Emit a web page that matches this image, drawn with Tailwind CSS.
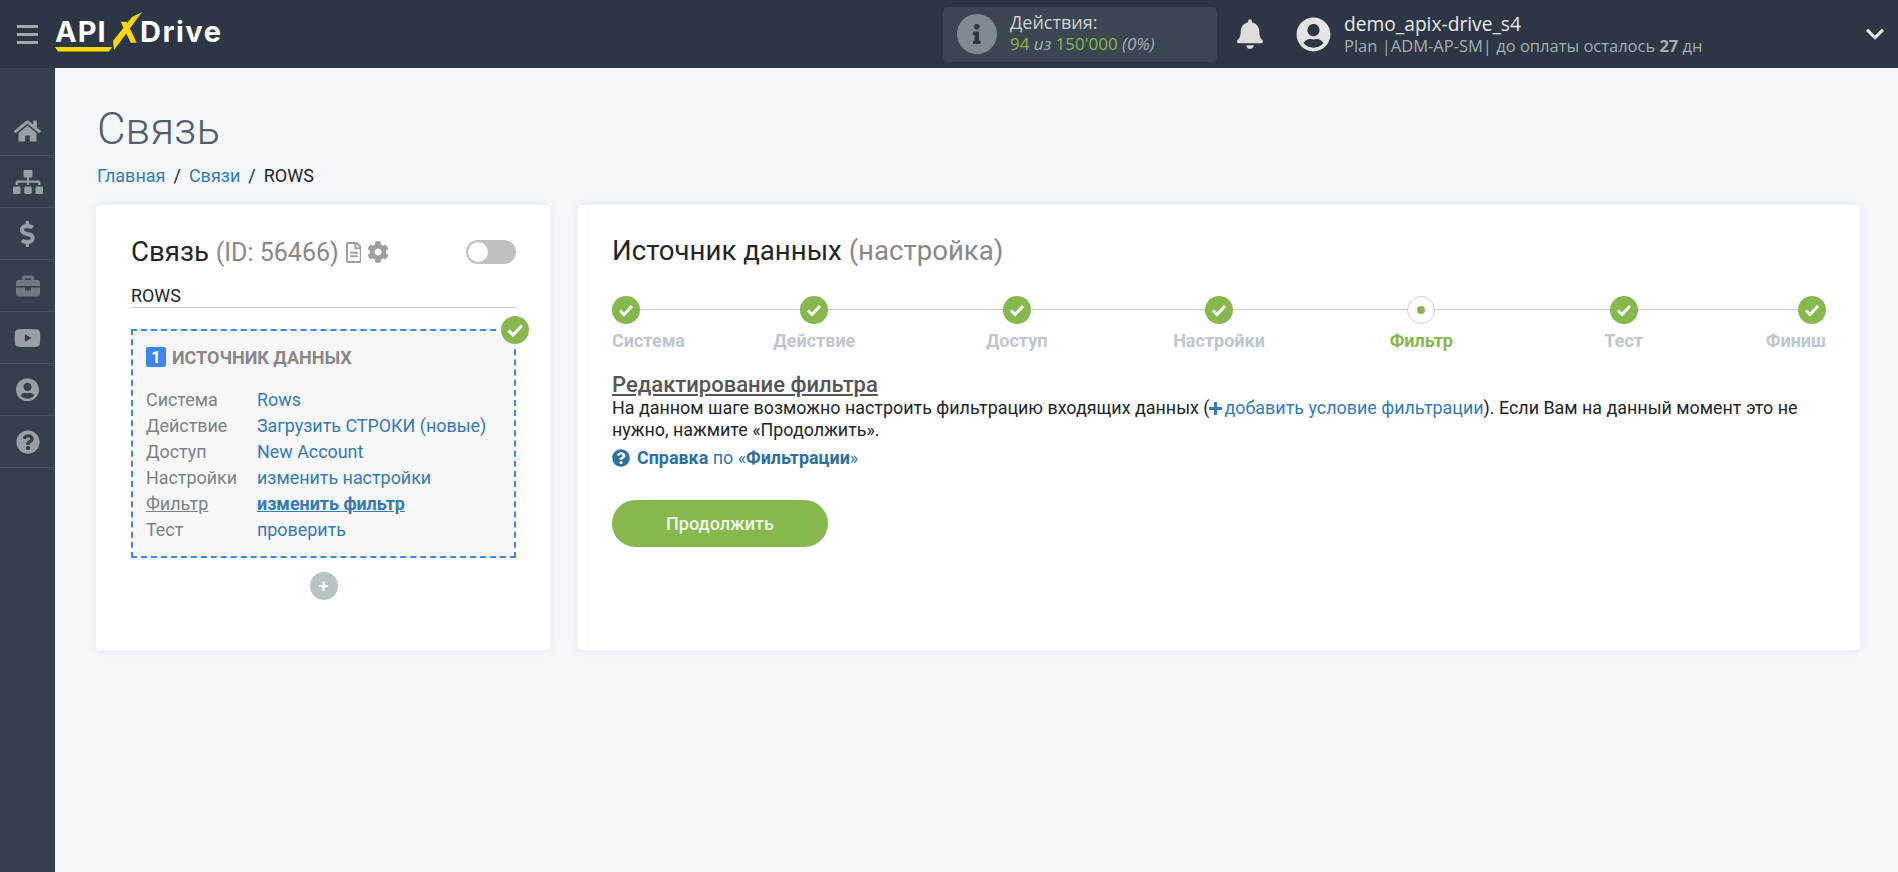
<!DOCTYPE html>
<html>

<head>
    <title>ApiX-Drive</title>
    <script src="https://cdn.jsdelivr.net/npm/@tailwindcss/browser@4"></script>
</head>

<body class="bg-[#f4f7fc] font-['Roboto',sans-serif] text-[17.9px] text-[#212529] h-[872px] overflow-hidden">

    <!-- Top bar -->
    <header class="h-[68px] bg-[#2c3644] flex items-center font-['Open_Sans',sans-serif]">
        <div class="w-[55px] pl-[17px] flex flex-col gap-[5px] shrink-0">
            <div class="w-[21px] h-[3px] bg-[#a3a7ad]"></div>
            <div class="w-[21px] h-[3px] bg-[#a3a7ad]"></div>
            <div class="w-[21px] h-[3px] bg-[#a3a7ad]"></div>
        </div>
        <!-- Logo -->
        <div class="relative w-[170px] h-[50px] shrink-0 text-white font-['Inter',sans-serif] font-bold text-[29px] leading-[50px]">
            <span class="absolute left-0 top-[-2px] tracking-[1px]">API</span>
            <span class="absolute left-[85px] top-[-2px] tracking-[1.5px]">Drive</span>
            <svg class="absolute left-0 top-0" width="170" height="50" viewBox="55 9 170 50">
                <path d="M55 47h57l-3 4.5H58z" fill="#ffd800" />
                <path d="M132 17l10-5-28 38-1-9z" fill="#ffd800" />
                <path d="M120.700 21.700h6l10 21h-6z" fill="#ffd800" />
            </svg>
        </div>
        <!-- Actions -->
        <div class="ml-[718px] w-[274px] h-[55px] bg-[#3a4651] rounded-[5px] flex items-center pl-[14px] shrink-0">
            <div class="w-[40px] h-[40px] rounded-full bg-[#818991] flex items-center justify-center">
                <svg class="h-[20px]" viewBox="0 0 192 512" fill="#2c3644"><path d="M20 424.229h20V279.771H20c-11.046 0-20-8.954-20-20V212c0-11.046 8.954-20 20-20h112c11.046 0 20 8.954 20 20v212.229h20c11.046 0 20 8.954 20 20V492c0 11.046-8.954 20-20 20H20c-11.046 0-20-8.954-20-20v-47.771c0-11.046 8.954-20 20-20zM96 0C56.235 0 24 32.235 24 72s32.235 72 72 72 72-32.235 72-72S135.764 0 96 0z"/></svg>
            </div>
            <div class="ml-[13px] mt-[-2px]">
                <div class="text-[#cfd2d5] text-[18px] leading-[22px]">Действия:</div>
                <div class="text-[#88b84e] text-[17px] leading-[22px]">94 <i class="text-[#a5adb5]">из</i> 150'000 <i class="text-[#a5adb5]">(0%)</i></div>
            </div>
        </div>
        <svg class="ml-[20px] w-[26px] h-[30px] shrink-0" viewBox="0 0 448 512" fill="#dcdcdc"><path d="M224 512c35.32 0 63.97-28.65 63.97-64H160.03c0 35.35 28.65 64 63.97 64zm215.39-149.71c-19.32-20.76-55.47-51.99-55.47-154.29 0-77.7-54.48-139.9-127.94-155.16V32c0-17.67-14.32-32-31.98-32s-31.98 14.33-31.98 32v20.84C118.56 68.1 64.08 130.3 64.08 208c0 102.3-36.15 133.53-55.47 154.29-6 6.45-8.66 14.16-8.61 21.71.11 16.4 12.98 32 32.1 32h383.8c19.12 0 32-15.6 32.1-32 .05-7.55-2.61-15.27-8.61-21.71z"/></svg>
        <svg class="ml-[33px] w-[35px] h-[35px] shrink-0" viewBox="0 0 496 512" fill="#e4e4e4"><path d="M248 8C111 8 0 119 0 256s111 248 248 248 248-111 248-248S385 8 248 8zm0 96c48.6 0 88 39.4 88 88s-39.4 88-88 88-88-39.4-88-88 39.4-88 88-88zm0 344c-58.7 0-111.3-26.6-146.5-68.2 18.8-35.4 55.6-59.8 98.5-59.8 2.4 0 4.8.4 7.1 1.1 13 4.2 26.6 6.9 40.9 6.9 14.3 0 28-2.7 40.9-6.9 2.3-.7 4.7-1.1 7.1-1.1 42.9 0 79.7 24.4 98.5 59.8C359.3 421.4 306.7 448 248 448z"/></svg>
        <div class="ml-[13px] flex-1">
            <div class="text-[19.200px] leading-[24px] text-[#ebebeb]">demo_apix-drive_s4</div>
            <div class="text-[16.500px] leading-[20px] text-[#a5adb5]">Plan |ADM-AP-SM| до оплаты осталось <b>27</b> дн</div>
        </div>
        <svg class="w-[18px] mr-[14px] shrink-0" viewBox="0 0 448 512" fill="#e4e4e4"><path d="M207.029 381.476L12.686 187.132c-9.373-9.373-9.373-24.569 0-33.941l22.667-22.667c9.357-9.357 24.522-9.375 33.901-.04L224 284.505l154.745-154.021c9.379-9.335 24.544-9.317 33.901.04l22.667 22.667c9.373 9.373 9.373 24.569 0 33.941L240.971 381.476c-9.373 9.372-24.569 9.372-33.942 0z"/></svg>
    </header>

    <div class="flex h-[804px]">
        <!-- Sidebar -->
        <aside class="w-[55px] shrink-0 bg-[#353f4d] pt-[36px]">
            <div class="h-[52px] border-b border-[#4a5462] flex items-center justify-center">
                <svg class="w-[27px] mt-[2px]" viewBox="0 0 576 512" fill="#9a9fa6"><path d="M280.37 148.26L96 300.11V464a16 16 0 0 0 16 16l112.06-.29a16 16 0 0 0 15.92-16V368a16 16 0 0 1 16-16h64a16 16 0 0 1 16 16v95.64a16 16 0 0 0 16 16.05L464 480a16 16 0 0 0 16-16V300L295.67 148.26a12.19 12.19 0 0 0-15.3 0zM571.6 251.47L488 182.56V44.05a12 12 0 0 0-12-12h-56a12 12 0 0 0-12 12v72.61L318.47 43a48 48 0 0 0-61 0L4.34 251.47a12 12 0 0 0-1.6 16.9l25.5 31A12 12 0 0 0 45.15 301l235.22-193.74a12.19 12.19 0 0 1 15.3 0L530.9 301a12 12 0 0 0 16.9-1.6l25.5-31a12 12 0 0 0-1.7-16.93z"/></svg>
            </div>
            <div class="h-[52px] border-b border-[#4a5462] flex items-center justify-center">
                <svg class="w-[30px]" viewBox="0 0 640 512" fill="#9a9fa6"><path d="M128 352H32c-17.67 0-32 14.33-32 32v96c0 17.67 14.33 32 32 32h96c17.67 0 32-14.33 32-32v-96c0-17.67-14.33-32-32-32zm-24-80h192v48h48v-48h192v48h48v-57.59c0-21.17-17.23-38.41-38.41-38.41H344v-64h40c17.67 0 32-14.33 32-32V32c0-17.67-14.33-32-32-32H256c-17.67 0-32 14.33-32 32v96c0 17.67 14.33 32 32 32h40v64H94.41C73.23 224 56 241.23 56 262.41V320h48v-48zm264 80h-96c-17.67 0-32 14.33-32 32v96c0 17.67 14.33 32 32 32h96c17.67 0 32-14.33 32-32v-96c0-17.67-14.33-32-32-32zm240 0h-96c-17.67 0-32 14.33-32 32v96c0 17.67 14.33 32 32 32h96c17.67 0 32-14.33 32-32v-96c0-17.67-14.33-32-32-32z"/></svg>
            </div>
            <div class="h-[52px] border-b border-[#4a5462] flex items-center justify-center">
                <svg class="h-[26px]" viewBox="0 0 288 512" fill="#9a9fa6"><path d="M209.2 233.4l-108-31.6C88.7 198.2 80 186.5 80 173.5c0-16.3 13.2-29.5 29.5-29.5h66.3c12.2 0 24.2 3.7 34.2 10.5 6.1 4.1 14.3 3.1 19.5-2l34.8-34c7.1-6.9 6.1-18.4-1.8-24.5C238 74.8 207.4 64.1 176 64V16c0-8.8-7.2-16-16-16h-32c-8.8 0-16 7.2-16 16v48h-2.5C45.8 64-5.4 118.7.5 183.6c4.2 46.1 39.4 83.6 83.8 96.6l102.5 30c12.5 3.7 21.2 15.3 21.2 28.3 0 16.3-13.2 29.5-29.5 29.5h-66.3C100 368 88 364.3 78 357.5c-6.1-4.1-14.3-3.1-19.5 2l-34.8 34c-7.1 6.9-6.1 18.4 1.8 24.5 24.5 19.2 55.1 29.9 86.5 30v48c0 8.8 7.2 16 16 16h32c8.8 0 16-7.2 16-16v-48.2c46.6-.9 90.3-28.6 105.7-72.7 21.5-61.6-14.6-124.8-72.5-141.7z"/></svg>
            </div>
            <div class="h-[52px] border-b border-[#4a5462] flex items-center justify-center">
                <svg class="w-[24px]" viewBox="0 0 512 512" fill="#6f7882"><path d="M320 336c0 8.84-7.16 16-16 16h-96c-8.84 0-16-7.16-16-16v-48H0v144c0 25.6 22.4 48 48 48h416c25.6 0 48-22.4 48-48V288H320v48zm144-208h-80V80c0-25.6-22.4-48-48-48H176c-25.6 0-48 22.4-48 48v48H48c-25.6 0-48 22.4-48 48v80h512v-80c0-25.6-22.4-48-48-48zm-144 0H192V96h128v32z"/></svg>
            </div>
            <div class="h-[52px] border-b border-[#4a5462] flex items-center justify-center">
                <svg class="w-[27px]" viewBox="0 0 576 512" fill="#9a9fa6"><path d="M549.655 124.083c-6.281-23.65-24.787-42.276-48.284-48.597C458.781 64 288 64 288 64S117.22 64 74.629 75.486c-23.497 6.322-42.003 24.947-48.284 48.597-11.412 42.867-11.412 132.305-11.412 132.305s0 89.438 11.412 132.305c6.281 23.65 24.787 41.5 48.284 47.821C117.22 448 288 448 288 448s170.78 0 213.371-11.486c23.497-6.321 42.003-24.171 48.284-47.821 11.412-42.867 11.412-132.305 11.412-132.305s0-89.438-11.412-132.305zm-317.51 213.508V175.185l142.739 81.205-142.739 81.201z"/></svg>
            </div>
            <div class="h-[52px] border-b border-[#4a5462] flex items-center justify-center">
                <svg class="w-[23px]" viewBox="0 0 496 512" fill="#9a9fa6"><path d="M248 8C111 8 0 119 0 256s111 248 248 248 248-111 248-248S385 8 248 8zm0 96c48.6 0 88 39.4 88 88s-39.4 88-88 88-88-39.4-88-88 39.4-88 88-88zm0 344c-58.7 0-111.3-26.6-146.5-68.2 18.8-35.4 55.6-59.8 98.5-59.8 2.4 0 4.8.4 7.1 1.1 13 4.2 26.6 6.9 40.9 6.9 14.3 0 28-2.7 40.9-6.9 2.3-.7 4.7-1.1 7.1-1.1 42.9 0 79.7 24.4 98.5 59.8C359.3 421.4 306.7 448 248 448z"/></svg>
            </div>
            <div class="h-[52px] border-b border-[#4a5462] flex items-center justify-center">
                <svg class="w-[24px]" viewBox="0 0 512 512" fill="#9a9fa6"><path d="M504 256c0 136.997-111.043 248-248 248S8 392.997 8 256C8 119.083 119.043 8 256 8s248 111.083 248 248zM262.655 90c-54.497 0-89.255 22.957-116.549 63.758-3.536 5.286-2.353 12.415 2.715 16.258l34.699 26.31c5.205 3.947 12.621 3.008 16.665-2.122 17.864-22.658 30.113-35.797 57.303-35.797 20.429 0 45.698 13.148 45.698 32.958 0 14.976-12.363 22.667-32.534 33.976C247.128 238.528 216 254.941 216 296v4c0 6.627 5.373 12 12 12h56c6.627 0 12-5.373 12-12v-1.333c0-28.462 83.186-29.647 83.186-106.667 0-58.002-60.165-102-116.531-102zM256 338c-25.365 0-46 20.635-46 46 0 25.364 20.635 46 46 46s46-20.636 46-46c0-25.365-20.635-46-46-46z"/></svg>
            </div>
        </aside>

        <!-- Main -->
        <main class="flex-1 pl-[41px] pr-[38px]">
            <h1 class="text-[44px] leading-[52px] font-light text-[#4f5f6b] mt-[35px] ml-[1px]">Связь</h1>
            <div class="mt-[10px] ml-[1px] h-[22px] leading-[22px] text-[18px] flex gap-[8px]">
                <span class="text-[#337ab7]">Главная</span><span>/</span><span class="text-[#337ab7]">Связи</span><span>/</span><span>ROWS</span>
            </div>
            <div class="flex gap-[28px] mt-[18px]">
                <!-- Left card -->
                <section class="w-[454px] h-[445px] bg-white rounded-[4px] shadow-[0_0_10px_rgba(100,120,160,0.12)] pl-[35px] pr-[34px] pt-[29px]">
                    <div class="flex items-center h-[36px]">
                        <span class="text-[27.600px] leading-[36px] whitespace-nowrap">Связь <span class="text-[#888888] text-[25px]">(ID: 56466)</span></span>
                        <svg class="ml-[7px] h-[21px]" viewBox="0 0 384 512" fill="#9e9e9e"><path d="M288 248v28c0 6.6-5.4 12-12 12H108c-6.6 0-12-5.4-12-12v-28c0-6.6 5.4-12 12-12h168c6.6 0 12 5.4 12 12zm-12 72H108c-6.6 0-12 5.4-12 12v28c0 6.6 5.4 12 12 12h168c6.6 0 12-5.4 12-12v-28c0-6.6-5.4-12-12-12zm108-188.1V464c0 26.5-21.5 48-48 48H48c-26.5 0-48-21.5-48-48V48C0 21.5 21.5 0 48 0h204.1C264.8 0 277 5.1 286 14.1L369.9 98c9 8.9 14.1 21.2 14.1 33.9zm-128-80V128h76.1L256 51.9zM336 464V176H232c-13.3 0-24-10.7-24-24V48H48v416h288z"/></svg>
                        <svg class="ml-[6px] h-[22px]" viewBox="0 0 512 512" fill="#9e9e9e"><path d="M487.4 315.7l-42.6-24.6c4.3-23.2 4.3-47 0-70.2l42.6-24.6c4.9-2.8 7.1-8.6 5.5-14-11.1-35.6-30-67.8-54.7-94.6-3.8-4.1-10-5.1-14.8-2.3L380.8 110c-17.9-15.4-38.5-27.3-60.8-35.1V25.8c0-5.6-3.9-10.5-9.4-11.7-36.7-8.2-74.3-7.8-109.2 0-5.5 1.2-9.4 6.1-9.4 11.7V75c-22.2 7.9-42.8 19.8-60.8 35.1L88.7 85.5c-4.9-2.8-11-1.9-14.8 2.3-24.7 26.7-43.6 58.9-54.7 94.6-1.7 5.4.6 11.2 5.5 14L67.3 221c-4.3 23.2-4.3 47 0 70.2l-42.6 24.6c-4.9 2.8-7.1 8.6-5.5 14 11.1 35.6 30 67.8 54.7 94.6 3.8 4.1 10 5.1 14.8 2.3l42.6-24.6c17.9 15.4 38.5 27.3 60.8 35.1v49.2c0 5.6 3.9 10.5 9.4 11.7 36.7 8.2 74.3 7.8 109.2 0 5.5-1.2 9.4-6.1 9.4-11.7v-49.2c22.2-7.9 42.8-19.8 60.8-35.1l42.6 24.6c4.9 2.8 11 1.9 14.8-2.3 24.7-26.7 43.6-58.9 54.7-94.6 1.5-5.5-.7-11.3-5.6-14.1zM256 336c-44.1 0-80-35.9-80-80s35.9-80 80-80 80 35.9 80 80-35.9 80-80 80z"/></svg>
                        <div class="ml-auto w-[50px] h-[24px] rounded-full bg-[#c0c0c0] p-[2px]">
                            <div class="w-[20px] h-[20px] rounded-full bg-white"></div>
                        </div>
                    </div>
                    <div class="mt-[14px] h-[23px] leading-[23px] border-b border-[#cccccc] box-content">ROWS</div>

                    <!-- Source box -->
                    <div class="relative mt-[21px] h-[229px] bg-[#f8f8f8] border-2 border-dashed border-[#3b86f0] pl-[13px] pt-[16px]">
                        <div class="absolute right-[-16px] top-[-16px] w-[30px] h-[30px] rounded-full bg-white flex items-center justify-center">
                            <svg class="w-[28px] h-[28px]" viewBox="0 0 28 28"><circle cx="14" cy="14" r="14" fill="#87b84e"/><path d="M7.500 14.500l4.500 4.500 9-9.500" fill="none" stroke="#fff" stroke-width="3.200"/></svg>
                        </div>
                        <div class="flex items-center h-[20px]">
                            <span class="w-[20px] h-[20px] rounded-[2px] bg-[#3b86f0] text-white font-bold text-[17px] leading-[20px] text-center">1</span>
                            <span class="ml-[6px] text-[18px] font-bold text-[#888888] uppercase">Источник данных</span>
                        </div>
                        <div class="mt-[20px] grid grid-cols-[111px_1fr] leading-[26px] text-[#337ab7]">
                            <span class="text-[#7a828a]">Система</span><span>Rows</span>
                            <span class="text-[#7a828a]">Действие</span><span>Загрузить СТРОКИ (новые)</span>
                            <span class="text-[#7a828a]">Доступ</span><span>New Account</span>
                            <span class="text-[#7a828a]">Настройки</span><span>изменить настройки</span>
                            <span class="text-[#7a828a] underline">Фильтр</span><span class="font-bold underline">изменить фильтр</span>
                            <span class="text-[#7a828a]">Тест</span><span>проверить</span>
                        </div>
                    </div>
                    <div class="mt-[14px] mx-auto w-[28px] h-[28px] rounded-full bg-[#b5c4c4] text-white text-[18px] leading-[27px] text-center font-medium">+</div>
                </section>

                <!-- Right card -->
                <section class="flex-1 h-[445px] bg-white rounded-[4px] shadow-[0_0_10px_rgba(100,120,160,0.12)] px-[34px] pt-[28px]">
                    <h2 class="text-[27.600px] leading-[36px] h-[36px]">Источник данных <span class="text-[#888888]">(настройка)</span></h2>

                    <!-- Steps -->
                    <div class="relative mt-[27px] flex justify-between text-[18px] font-bold text-[#c0c5cf] h-[55px]">
                        <div class="absolute left-[13px] right-[13px] top-[13px] h-[1px] bg-[#c8c8c8]"></div>
                        <div class="relative w-[100px] mr-[-50px] flex flex-col items-start whitespace-nowrap">
                            <svg class="w-[28px] h-[28px] shrink-0" viewBox="0 0 28 28"><circle cx="14" cy="14" r="14" fill="#87b84e"/><path d="M8 14.500l4 4 8-8.500" fill="none" stroke="#fff" stroke-width="3"/></svg>
                            <span class="mt-[5px] leading-[24px]">Система</span>
                        </div>
                        <div class="relative w-[100px] flex flex-col items-center whitespace-nowrap">
                            <svg class="w-[28px] h-[28px] shrink-0" viewBox="0 0 28 28"><circle cx="14" cy="14" r="14" fill="#87b84e"/><path d="M8 14.500l4 4 8-8.500" fill="none" stroke="#fff" stroke-width="3"/></svg>
                            <span class="mt-[5px] leading-[24px]">Действие</span>
                        </div>
                        <div class="relative w-[100px] flex flex-col items-center whitespace-nowrap">
                            <svg class="w-[28px] h-[28px] shrink-0" viewBox="0 0 28 28"><circle cx="14" cy="14" r="14" fill="#87b84e"/><path d="M8 14.500l4 4 8-8.500" fill="none" stroke="#fff" stroke-width="3"/></svg>
                            <span class="mt-[5px] leading-[24px]">Доступ</span>
                        </div>
                        <div class="relative w-[100px] flex flex-col items-center whitespace-nowrap">
                            <svg class="w-[28px] h-[28px] shrink-0" viewBox="0 0 28 28"><circle cx="14" cy="14" r="14" fill="#87b84e"/><path d="M8 14.500l4 4 8-8.500" fill="none" stroke="#fff" stroke-width="3"/></svg>
                            <span class="mt-[5px] leading-[24px]">Настройки</span>
                        </div>
                        <div class="relative w-[100px] flex flex-col items-center whitespace-nowrap text-[#87b84e]">
                            <svg class="w-[28px] h-[28px] shrink-0" viewBox="0 0 28 28"><circle cx="14" cy="14" r="13.500" fill="#fff" stroke="#d0d0d0"/><circle cx="14" cy="14" r="4" fill="#87b84e"/></svg>
                            <span class="mt-[5px] leading-[24px]">Фильтр</span>
                        </div>
                        <div class="relative w-[100px] flex flex-col items-center whitespace-nowrap">
                            <svg class="w-[28px] h-[28px] shrink-0" viewBox="0 0 28 28"><circle cx="14" cy="14" r="14" fill="#87b84e"/><path d="M8 14.500l4 4 8-8.500" fill="none" stroke="#fff" stroke-width="3"/></svg>
                            <span class="mt-[5px] leading-[24px]">Тест</span>
                        </div>
                        <div class="relative w-[100px] ml-[-50px] flex flex-col items-end whitespace-nowrap">
                            <svg class="w-[28px] h-[28px] shrink-0" viewBox="0 0 28 28"><circle cx="14" cy="14" r="14" fill="#87b84e"/><path d="M8 14.500l4 4 8-8.500" fill="none" stroke="#fff" stroke-width="3"/></svg>
                            <span class="mt-[5px] leading-[24px]">Финиш</span>
                        </div>
                    </div>

                    <h3 class="mt-[21px] text-[22px] leading-[25px] font-medium text-[#555555] underline">Редактирование фильтра</h3>
                    <p class="leading-[22px]">На данном шаге возможно настроить фильтрацию входящих данных (<span class="text-[#337ab7]"><svg class="inline w-[13px] h-[13px] mb-[2px] mr-[2px]" viewBox="0 0 13 13" fill="#337ab7"><path d="M5 0h3v5h5v3H8v5H5V8H0V5h5z"/></svg>добавить условие фильтрации</span>). Если Вам на данный момент это не нужно, нажмите «Продолжить».</p>
                    <div class="mt-[6px] flex items-center h-[22px] text-[17.900px] text-[#2d6f9f]">
                        <svg class="w-[18px] h-[18px] mr-[7px]" viewBox="0 0 512 512" fill="#2d6f9f"><path d="M504 256c0 136.997-111.043 248-248 248S8 392.997 8 256C8 119.083 119.043 8 256 8s248 111.083 248 248zM262.655 90c-54.497 0-89.255 22.957-116.549 63.758-3.536 5.286-2.353 12.415 2.715 16.258l34.699 26.31c5.205 3.947 12.621 3.008 16.665-2.122 17.864-22.658 30.113-35.797 57.303-35.797 20.429 0 45.698 13.148 45.698 32.958 0 14.976-12.363 22.667-32.534 33.976C247.128 238.528 216 254.941 216 296v4c0 6.627 5.373 12 12 12h56c6.627 0 12-5.373 12-12v-1.333c0-28.462 83.186-29.647 83.186-106.667 0-58.002-60.165-102-116.531-102zM256 338c-25.365 0-46 20.635-46 46 0 25.364 20.635 46 46 46s46-20.636 46-46c0-25.365-20.635-46-46-46z"/></svg>
                        <span><b>Справка</b> <span class="text-[#337ab7]">по «</span><b>Фильтрации</b><span class="text-[#337ab7]">»</span></span>
                    </div>
                    <button class="mt-[31px] w-[216px] h-[47px] rounded-[24px] bg-[#87b84e] text-white/90 text-[18px] font-medium">Продолжить</button>
                </section>
            </div>
        </main>
    </div>
</body>

</html>
